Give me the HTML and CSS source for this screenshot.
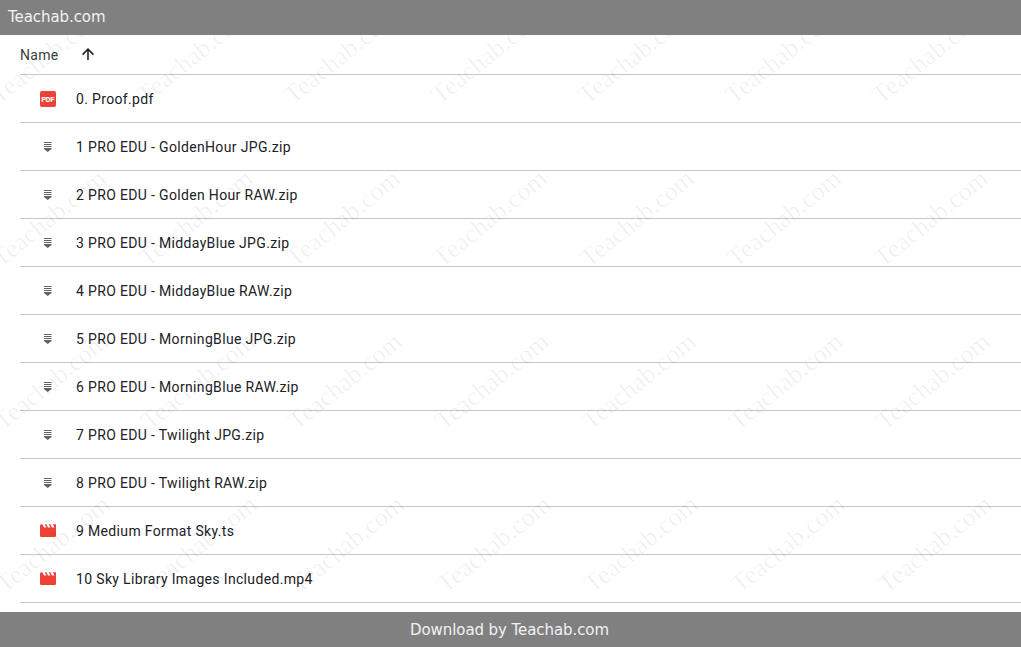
FILE: index.html
```html
<!DOCTYPE html>
<html lang="en">
<head>
  <meta charset="UTF-8" />
  <title>Teachab.com</title>
  <link rel="stylesheet" href="styles.css">
</head>
<body>
  <svg class="icon-defs" width="0" height="0">
    <symbol id="icon-pdf" viewBox="0 0 16 16">
      <rect width="16" height="16" rx="2" fill="#ea4335" />
      <text x="8" y="10.5" text-anchor="middle" class="pdf-label">PDF</text>
    </symbol>
    <symbol id="icon-zip" viewBox="0 0 16 16">
      <path d="M4 3h7.5v1H4zM4 5h7.5v1H4zM4 7h7.5v1H4zM4 9h7.5v1l-3.75 3L4 10z" fill="#5f6368" />
    </symbol>
    <symbol id="icon-video" viewBox="2 2.5 20 20">
      <path d="M18 4l2 4h-3l-2-4h-2l2 4h-3l-2-4H8l2 4H7L5 4H4c-1.1 0-1.99.9-1.99 2L2 18c0 1.1.9 2 2 2h16c1.1 0 2-.9 2-2V4h-4z" fill="#ea4335" />
    </symbol>
  </svg>

  <header class="top-bar">Teachab.com</header>

  <main class="file-list">
    <div class="list-head">
      <span class="head-name">Name</span>
      <svg class="sort-arrow" width="16" height="16" viewBox="0 0 16 16">
        <path d="M8 2.4V13M2.6 7.6 8 2.2l5.4 5.4" fill="none" stroke="#202124" stroke-width="1.6" />
      </svg>
    </div>
    <div class="file-row">
      <svg class="file-icon"><use href="#icon-pdf" /></svg>
      <span class="file-name">0. Proof.pdf</span>
    </div>
    <div class="file-row">
      <svg class="file-icon"><use href="#icon-zip" /></svg>
      <span class="file-name">1 PRO EDU - GoldenHour JPG.zip</span>
    </div>
    <div class="file-row">
      <svg class="file-icon"><use href="#icon-zip" /></svg>
      <span class="file-name">2 PRO EDU - Golden Hour RAW.zip</span>
    </div>
    <div class="file-row">
      <svg class="file-icon"><use href="#icon-zip" /></svg>
      <span class="file-name">3 PRO EDU - MiddayBlue JPG.zip</span>
    </div>
    <div class="file-row">
      <svg class="file-icon"><use href="#icon-zip" /></svg>
      <span class="file-name">4 PRO EDU - MiddayBlue RAW.zip</span>
    </div>
    <div class="file-row">
      <svg class="file-icon"><use href="#icon-zip" /></svg>
      <span class="file-name">5 PRO EDU - MorningBlue JPG.zip</span>
    </div>
    <div class="file-row">
      <svg class="file-icon"><use href="#icon-zip" /></svg>
      <span class="file-name">6 PRO EDU - MorningBlue RAW.zip</span>
    </div>
    <div class="file-row">
      <svg class="file-icon"><use href="#icon-zip" /></svg>
      <span class="file-name">7 PRO EDU - Twilight JPG.zip</span>
    </div>
    <div class="file-row">
      <svg class="file-icon"><use href="#icon-zip" /></svg>
      <span class="file-name">8 PRO EDU - Twilight RAW.zip</span>
    </div>
    <div class="file-row">
      <svg class="file-icon"><use href="#icon-video" /></svg>
      <span class="file-name">9 Medium Format Sky.ts</span>
    </div>
    <div class="file-row">
      <svg class="file-icon"><use href="#icon-video" /></svg>
      <span class="file-name">10 Sky Library Images Included.mp4</span>
    </div>
  </main>

  <footer class="bottom-bar">Download by Teachab.com</footer>

  <div class="watermarks" id="watermarks"></div>
  <script src="script.js"></script>
</body>
</html>
```

FILE: styles.css
```css
html, body {
  height: 100%;
}
body {
  margin: 0;
  font-family: Roboto, 'Liberation Sans', sans-serif;
  background-color: #ffffff;
  color: #202124;
  display: flex;
  flex-direction: column;
  overflow: hidden;
}
.icon-defs {
  position: absolute;
}
.top-bar {
  height: 35px;
  flex: none;
  box-sizing: border-box;
  padding: 8px 8px 0;
  background-color: #808080;
  color: #f2f2f2;
  font-family: 'DejaVu Sans', Verdana, sans-serif;
  font-size: 15px;
  line-height: 18px;
  letter-spacing: -0.08px;
}
.file-list {
  flex: 1;
  padding-left: 20px;
}
.list-head {
  height: 39px;
  display: flex;
  align-items: center;
  border-bottom: 1px solid #c8c8c8;
}
.head-name {
  width: 60px;
  font-size: 14px;
  letter-spacing: 0.3px;
  color: #3c4043;
}
.sort-arrow {
  flex: none;
}
.file-row {
  height: 47px;
  display: flex;
  align-items: center;
  border-bottom: 1px solid #c8c8c8;
}
.file-icon {
  width: 16px;
  height: 16px;
  flex: none;
  margin: 0 20px;
}
.pdf-label {
  font-family: 'Liberation Sans', sans-serif;
  font-size: 6.4px;
  font-weight: bold;
  fill: #ffffff;
  stroke: #ffffff;
  stroke-width: 0.2px;
}
.file-name {
  font-size: 14px;
  letter-spacing: 0.34px;
  color: #202124;
}
.bottom-bar {
  height: 35px;
  flex: none;
  box-sizing: border-box;
  padding-right: 2px;
  display: flex;
  align-items: center;
  justify-content: center;
  background-color: #808080;
  color: #f2f2f2;
  font-family: 'DejaVu Sans', Verdana, sans-serif;
  font-size: 15px;
  letter-spacing: -0.08px;
}
.watermarks {
  position: absolute;
  left: 0;
  right: 0;
  top: 35px;
  bottom: 35px;
  overflow: hidden;
  pointer-events: none;
}
.watermark {
  position: absolute;
  font-family: 'Liberation Serif', serif;
  font-size: 26px;
  line-height: 26px;
  white-space: nowrap;
  color: rgba(0, 0, 0, 0.06);
  transform: rotate(-39deg);
  transform-origin: left bottom;
}
```

FILE: script.js
```js
// watermark grid, each row sits 2px further right than the one above
const box = document.getElementById('watermarks');
for (let row = 0; row < 4; row++) {
  for (let col = 0; col < 7; col++) {
    const mark = document.createElement('span');
    mark.className = 'watermark';
    mark.textContent = 'Teachab.com';
    mark.style.left = (2 + row * 2 + col * 147) + 'px';
    mark.style.top = (48 + row * 163) + 'px';
    box.appendChild(mark);
  }
}
```
